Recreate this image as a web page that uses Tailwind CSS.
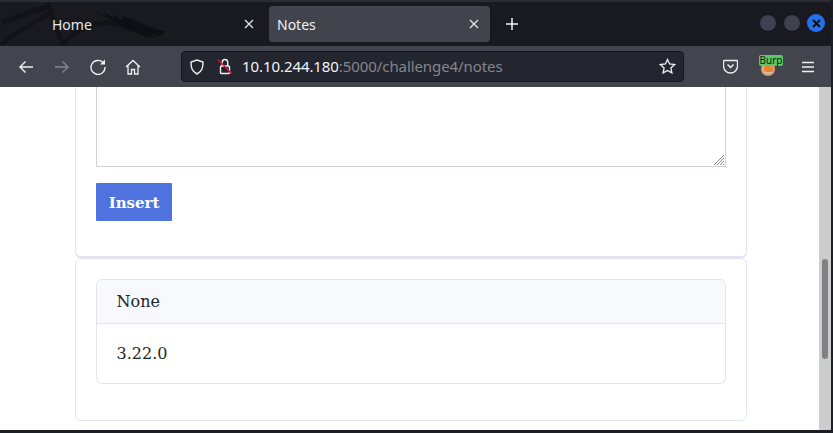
<!DOCTYPE html>
<html lang="en">
<head>
  <meta charset="UTF-8">
  <title>Notes</title>
  <script src="https://cdn.jsdelivr.net/npm/@tailwindcss/browser@4"></script>
</head>
<body class="h-[433px] w-[833px] overflow-hidden bg-[#1c1e26] font-['Noto_Sans',sans-serif]">
  <div class="flex h-[433px] flex-col border-r-2 border-b-[3px] border-[#1c1e26]">
    <!-- tab bar -->
    <div class="relative flex h-[46px] shrink-0 items-start border-t-2 border-[#2b2d35] bg-[#191a20] pl-[2px] pt-[4px]">
      <svg class="absolute left-0 -top-[2px] h-[46px] w-[170px]" viewBox="0 0 170 46" fill="none">
        <path d="M2 23C18 16 32 11 48 7" stroke="#121318" stroke-width="5"/>
        <path d="M2 44C14 34 32 24 52 12" stroke="#121318" stroke-width="4"/>
        <path d="M48 3C52 18 56 30 64 46" stroke="#121318" stroke-width="4"/>
        <path d="M62 46C72 32 88 24 104 23C116 22 124 26 132 30" stroke="#121318" stroke-width="5"/>
        <path d="M95 12L106 16L104 12L114 18L112 14L124 21L122 16C130 18 137 21 143 24C150 27 157 30 166 31L160 36L150 34L156 38C148 38 140 34 134 32C126 28 114 21 95 12Z" fill="#0e0f13"/>
      </svg>
      <div class="relative flex h-[36px] w-[263px] items-center pl-[50px] pr-[11px] text-[14px] text-[#e6e7ea]">
        <span class="flex-1">Home</span>
        <svg class="h-[10px] w-[10px]" viewBox="0 0 10 10" stroke="#e6e7ea" stroke-width="1.2"><path d="M1 1l8 8M9 1l-8 8"/></svg>
      </div>
      <div class="relative ml-[4px] flex h-[36px] w-[221px] items-center rounded-[4px] bg-[#42444d] pl-[8px] pr-[11px] text-[14px] text-[#f0f0f2]">
        <span class="flex-1">Notes</span>
        <svg class="h-[10px] w-[10px]" viewBox="0 0 10 10" stroke="#e6e7ea" stroke-width="1.2"><path d="M1 1l8 8M9 1l-8 8"/></svg>
      </div>
      <svg class="relative ml-[15px] mt-[11px] h-[14px] w-[14px]" viewBox="0 0 14 14" stroke="#f2f2f4" stroke-width="1.5"><path d="M7 1v12M1 7h12"/></svg>
      <div class="relative ml-auto mr-[6px] mt-[8px] flex items-center gap-[6px]">
        <span class="h-[18px] w-[18px] rounded-full border border-[#15161b] bg-[#3d4150]"></span>
        <span class="h-[18px] w-[18px] rounded-full border border-[#15161b] bg-[#3d4150]"></span>
        <span class="flex h-[18px] w-[18px] items-center justify-center rounded-full bg-[#2470ef]">
          <svg class="h-[9px] w-[9px]" viewBox="0 0 9 9" stroke="#10131c" stroke-width="2.2"><path d="M1 1l7 7M8 1l-7 7"/></svg>
        </span>
      </div>
    </div>
    <!-- toolbar -->
    <div class="flex h-[41px] shrink-0 items-center bg-[#43454e]">
      <svg class="ml-[18px] h-[16px] w-[16px]" viewBox="0 0 16 16" fill="none" stroke="#f0f0f2" stroke-width="1.4"><path d="M15 8H2M7.500 2.500L2 8l5.500 5.500"/></svg>
      <svg class="ml-[20px] h-[16px] w-[16px]" viewBox="0 0 16 16" fill="none" stroke="#85868d" stroke-width="1.4"><path d="M1 8h13M8.500 2.500L14 8l-5.500 5.500"/></svg>
      <svg class="ml-[20px] h-[16px] w-[16px]" viewBox="0 0 16 16" fill="none" stroke="#f0f0f2" stroke-width="1.4"><path d="M13 3.500A7 7 0 1 0 15 8"/><path d="M10 5.500h5v-5z" fill="#f0f0f2" stroke="none"/></svg>
      <svg class="ml-[19px] h-[16px] w-[16px]" viewBox="0 0 16 16" fill="none" stroke="#f0f0f2" stroke-width="1.3"><path d="M1 8l7-6.500L15 8M3 6.500V15h3.500v-4.500h3V15H13V6.500"/></svg>
      <div class="ml-[40px] flex h-[31px] w-[503px] items-center rounded-[4px] border border-[#15161b] bg-[#23252f] text-[15px] tracking-[-0.08px]">
        <svg class="ml-[8px] h-[16px] w-[14px]" viewBox="0 0 14 16" fill="none" stroke="#f0f0f2" stroke-width="1.4"><path d="M7 1l6 2c0 6-1 9.500-6 12C2 12.500 1 9 1 3z"/></svg>
        <svg class="ml-[13px] h-[17px] w-[16px]" viewBox="0 0 16 17" fill="none"><path d="M5.300 8V4.200a2.700 2.700 0 0 1 5.400 0V8" stroke="#f0f0f2" stroke-width="1.4"/><rect x="3.500" y="8" width="9" height="7.500" rx="1" stroke="#f0f0f2" stroke-width="1.4"/><path d="M1 1.500l14 14.500" stroke="#e0103f" stroke-width="1.500"/></svg>
        <span class="ml-[9px] text-[#f4f4f6]">10.10.244.180</span><span class="text-[#85868d]">:5000/challenge4/notes</span>
        <svg class="ml-auto mr-[7px] h-[17px] w-[17px]" viewBox="0 0 17 17" fill="none" stroke="#f0f0f2" stroke-width="1.3"><path d="M8.500 1.500l2.100 4.500 5 .6-3.700 3.400 1 4.900-4.400-2.500-4.400 2.500 1-4.900L1.400 6.600l5-.6z"/></svg>
      </div>
      <svg class="ml-[39px] h-[15px] w-[15px]" viewBox="0 0 15 15" fill="none" stroke="#f0f0f2" stroke-width="1.3"><path d="M1 1.500h13a.500.500 0 0 1 .500.500v5a7 7 0 0 1-14 0V2a.500.500 0 0 1 .500-.500z"/><path d="M4.500 5.500l3 3 3-3" stroke-width="1.500"/></svg>
      <div class="relative ml-[22px] h-[24px] w-[24px]">
        <span class="absolute left-[1px] top-[7px] h-[14px] w-[14px] rounded-full border-2 border-[#d9a27a] bg-[#c9c0b0]"></span>
        <span class="absolute left-[4px] top-[11px] h-[6px] w-[9px] rounded-[2px] bg-[#e8842f]"></span>
        <span class="absolute -left-[1px] top-0 flex h-[11px] w-[24px] items-center justify-center rounded-[2px] bg-[#5cc85f] text-[10px] leading-none text-[#15161b]">Burp</span>
      </div>
      <svg class="ml-[17px] h-[12px] w-[14px]" viewBox="0 0 14 12" stroke="#f0f0f2" stroke-width="1.4"><path d="M1 1.500h12M1 6h12M1 10.500h12"/></svg>
    </div>
    <!-- page -->
    <div class="flex min-h-0 flex-1 bg-white font-['DejaVu_Serif',serif] text-[16px] text-[#212529]">
      <div class="min-w-0 flex-1 overflow-hidden pl-[75px] pr-[72px]">
        <div class="-mt-[2px] h-[173px] rounded-b-[6px] border-x border-b-2 border-[#e3e4f0] px-[20px]">
          <div class="relative h-[82px] border-x border-b border-[#cfd0e0]">
            <svg class="absolute bottom-[1px] right-[1px] h-[11px] w-[11px]" viewBox="0 0 11 11" stroke="#8a8a8a" stroke-width="1"><path d="M1 11L11 1M4 11l7-7M7 11l4-4M10 11l1-1"/></svg>
          </div>
          <button class="mt-[16px] flex h-[38px] w-[76px] items-center justify-center rounded-[1px] bg-[#4e73df] pt-[2px] text-[15px] font-bold text-white">Insert</button>
        </div>
        <div class="h-[163px] rounded-[6px] border border-[#e3e4f0] px-[20px] pt-[20px]">
          <div class="h-[105px] overflow-hidden rounded-[6px] border border-[#e3e4f0]">
            <div class="flex h-[44px] items-center border-b border-[#e3e4f0] bg-[#f8f9fc] pl-[19.500px]">None</div>
            <div class="pl-[19.500px] pt-[20px] leading-[20px]">3.22.0</div>
          </div>
        </div>
      </div>
      <div class="w-[12px] shrink-0 bg-[#cdcdcd] px-[3px] pt-[172px]">
        <div class="h-[100px] rounded-full bg-[#7f8282]"></div>
      </div>
    </div>
  </div>
</body>
</html>
